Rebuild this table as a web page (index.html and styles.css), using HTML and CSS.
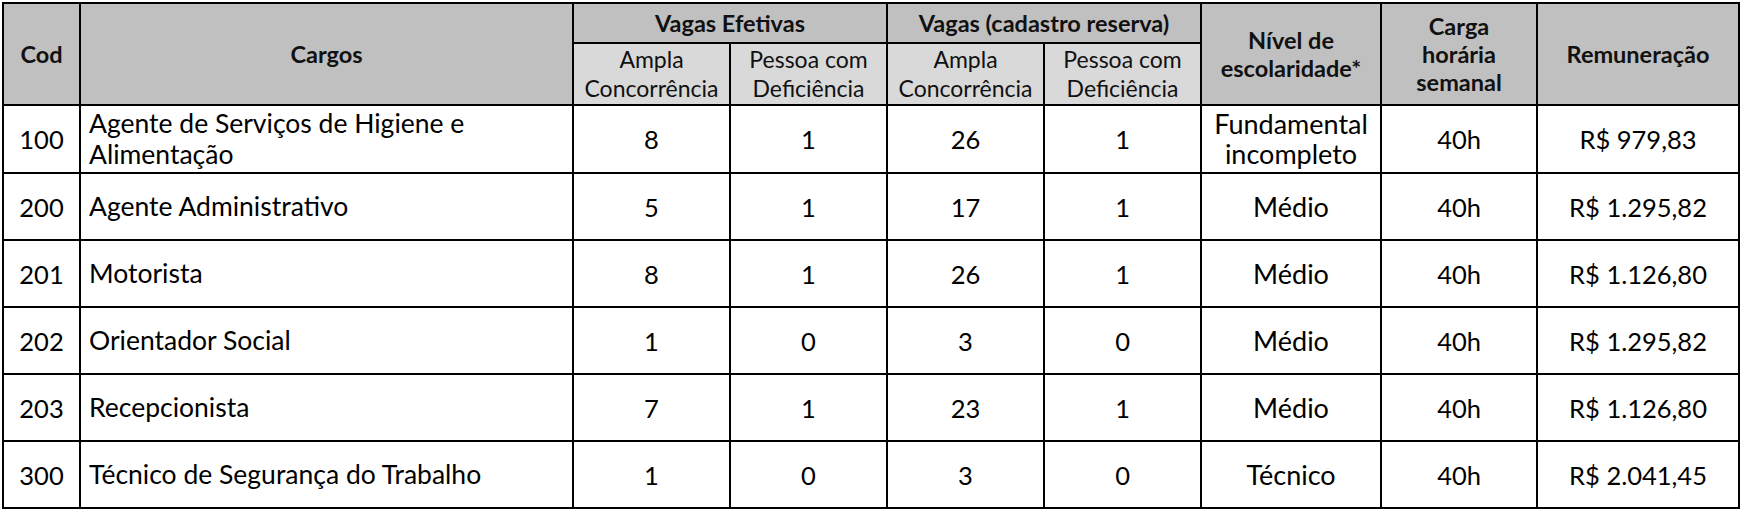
FILE: index.html
```html
<!DOCTYPE html>
<html lang="pt-BR">
<head>
<meta charset="utf-8">
<title>Cargos</title>
<link rel="stylesheet" href="styles.css">
</head>
<body>
<div class="wrap">
<table class="cargos">
  <colgroup>
    <col class="c-cod">
    <col class="c-cargo">
    <col class="c-sub">
    <col class="c-sub">
    <col class="c-sub">
    <col class="c-sub">
    <col class="c-nivel">
    <col class="c-carga">
    <col class="c-rem">
  </colgroup>
  <thead>
    <tr class="h1">
      <th rowspan="2">Cod</th>
      <th rowspan="2">Cargos</th>
      <th colspan="2">Vagas Efetivas</th>
      <th colspan="2">Vagas (cadastro reserva)</th>
      <th rowspan="2">Nível de<br>escolaridade*</th>
      <th rowspan="2">Carga<br>horária<br>semanal</th>
      <th rowspan="2">Remuneração</th>
    </tr>
    <tr class="h2">
      <th class="sub">Ampla<br>Concorrência</th>
      <th class="sub">Pessoa com<br>Deficiência</th>
      <th class="sub">Ampla<br>Concorrência</th>
      <th class="sub">Pessoa com<br>Deficiência</th>
    </tr>
  </thead>
  <tbody>
    <tr class="r-first">
      <td>100</td>
      <td class="cargo">Agente de Serviços de Higiene e<br>Alimentação</td>
      <td>8</td><td>1</td><td>26</td><td>1</td>
      <td class="txt">Fundamental<br>incompleto</td>
      <td>40h</td>
      <td>R$ 979,83</td>
    </tr>
    <tr>
      <td>200</td>
      <td class="cargo">Agente Administrativo</td>
      <td>5</td><td>1</td><td>17</td><td>1</td>
      <td class="txt">Médio</td>
      <td>40h</td>
      <td>R$ 1.295,82</td>
    </tr>
    <tr>
      <td>201</td>
      <td class="cargo">Motorista</td>
      <td>8</td><td>1</td><td>26</td><td>1</td>
      <td class="txt">Médio</td>
      <td>40h</td>
      <td>R$ 1.126,80</td>
    </tr>
    <tr>
      <td>202</td>
      <td class="cargo">Orientador Social</td>
      <td>1</td><td>0</td><td>3</td><td>0</td>
      <td class="txt">Médio</td>
      <td>40h</td>
      <td>R$ 1.295,82</td>
    </tr>
    <tr>
      <td>203</td>
      <td class="cargo">Recepcionista</td>
      <td>7</td><td>1</td><td>23</td><td>1</td>
      <td class="txt">Médio</td>
      <td>40h</td>
      <td>R$ 1.126,80</td>
    </tr>
    <tr>
      <td>300</td>
      <td class="cargo">Técnico de Segurança do Trabalho</td>
      <td>1</td><td>0</td><td>3</td><td>0</td>
      <td class="txt">Técnico</td>
      <td>40h</td>
      <td>R$ 2.041,45</td>
    </tr>
  </tbody>
</table>
</div>
</body>
</html>
```

FILE: styles.css
```css
html, body {
  margin: 0;
  padding: 0;
  background: #ffffff;
}

.wrap {
  padding: 2px 0 0 2px;
}

.cargos {
  border-collapse: collapse;
  table-layout: fixed;
  width: 1737px;
  font-family: Lato, "Liberation Sans", sans-serif;
  color: #000000;
}

.c-cod { width: 77px; }
.c-cargo { width: 493px; }
.c-sub { width: 157px; }
.c-nivel { width: 180px; }
.c-carga { width: 156px; }
.c-rem { width: 202px; }

.cargos th,
.cargos td {
  border: 2px solid #000000;
  padding: 0;
  text-align: center;
  vertical-align: middle;
}

.cargos th {
  background: #c0c0c0;
  font-weight: bold;
  font-size: 23.5px;
  line-height: 28px;
  color: #111111;
}

.cargos th.sub {
  background: #d9d9d9;
  font-weight: normal;
  font-size: 23px;
  line-height: 29px;
}

.h1 th { height: 38px; }
.h2 th { height: 60px; }

.cargos td {
  font-size: 25.5px;
  line-height: 30px;
  height: 65px;
}

.cargos td.txt {
  font-size: 27px;
}

.cargos tr.r-first td { height: 66px; }

.cargos td.cargo {
  text-align: left;
  padding-left: 8px;
  font-size: 26.5px;
  line-height: 31px;
}
```
